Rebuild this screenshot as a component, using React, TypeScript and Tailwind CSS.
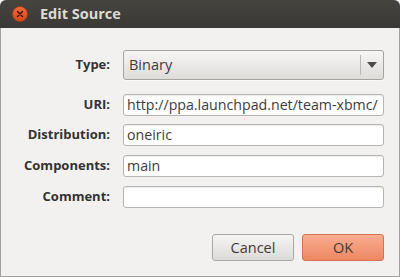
import React from "react";

const font = { fontFamily: '"Open Sans", "DejaVu Sans", sans-serif' };

function Row({ label, children, className }: { label: string; children: React.ReactNode; className: string }) {
  return (
    <div className={`flex items-center ${className}`}>
      <div className="w-[100px] text-right text-[13px] font-bold text-[#333333] whitespace-nowrap">{label}</div>
      <div className="ml-[13px] w-[261px]">{children}</div>
    </div>
  );
}

function Input({ value }: { value: string }) {
  return (
    <div className="h-[22px] w-full rounded-[3px] border border-[#b7b5b1] bg-white pl-[3px] text-[14.2px] leading-[20px] text-[#3c3c3c] overflow-hidden whitespace-nowrap shadow-[inset_0_1px_1px_rgba(0,0,0,0.08)]">
      {value}
    </div>
  );
}

export default function App() {
  return (
    <div className="w-[400px] h-[277px] flex flex-col bg-[#f2f1f0] overflow-hidden" style={font}>
      <div className="h-[28px] shrink-0 flex items-center rounded-t-[6px] bg-gradient-to-b from-[#45443f] to-[#3a3935]">
        <div className="ml-[12px] w-[16px] h-[16px] rounded-full bg-gradient-to-b from-[#f26a3a] to-[#d9471a] border border-[#a83c18] flex items-center justify-center">
          <svg width="8" height="8" viewBox="0 0 8 8">
            <path d="M1.5 1.5 L6.5 6.5 M6.5 1.5 L1.5 6.5" stroke="#2e1208" strokeWidth="1.4" strokeLinecap="round" />
          </svg>
        </div>
        <div className="ml-[12px] text-[14.5px] font-bold text-[#dfdbd2]">Edit Source</div>
      </div>
      <div className="flex-1 flex flex-col border-x border-b border-[#a3a19d] pl-[9px] pr-[15px]">
        <Row label="Type:" className="mt-[22px]">
          <div className="h-[30px] w-full rounded-[3px] border border-[#a5a39f] bg-gradient-to-b from-[#f7f6f5] to-[#dedcd9] flex items-center shadow-[0_1px_0_rgba(255,255,255,0.6)]">
            <div className="flex-1 pl-[5px] text-[14.5px] text-[#3c3c3c]">Binary</div>
            <div className="w-px h-[20px] bg-[#b9b7b3]" />
            <div className="w-[22px] flex items-center justify-center">
              <svg width="10" height="6" viewBox="0 0 10 6">
                <path d="M0 0 L10 0 L5 6 Z" fill="#4c4c4c" />
              </svg>
            </div>
          </div>
        </Row>
        <Row label="URI:" className="mt-[14px]">
          <Input value="http://ppa.launchpad.net/team-xbmc/" />
        </Row>
        <Row label="Distribution:" className="mt-[8px]">
          <Input value="oneiric" />
        </Row>
        <Row label="Components:" className="mt-[9px]">
          <Input value="main" />
        </Row>
        <Row label="Comment:" className="mt-[9px]">
          <Input value="" />
        </Row>
        <div className="mt-[26px] flex justify-end gap-[8px]">
          <div className="w-[82px] h-[27px] rounded-[3px] border border-[#a9a7a3] bg-gradient-to-b from-[#f6f5f4] to-[#dcdad7] flex items-center justify-center text-[14.5px] text-[#3c3c3c]">
            Cancel
          </div>
          <div className="w-[82px] h-[27px] rounded-[3px] border border-[#d27352] bg-gradient-to-b from-[#f8ad91] to-[#ee8762] flex items-center justify-center text-[14.5px] text-[#3c3c3c]">
            OK
          </div>
        </div>
      </div>
    </div>
  );
}
